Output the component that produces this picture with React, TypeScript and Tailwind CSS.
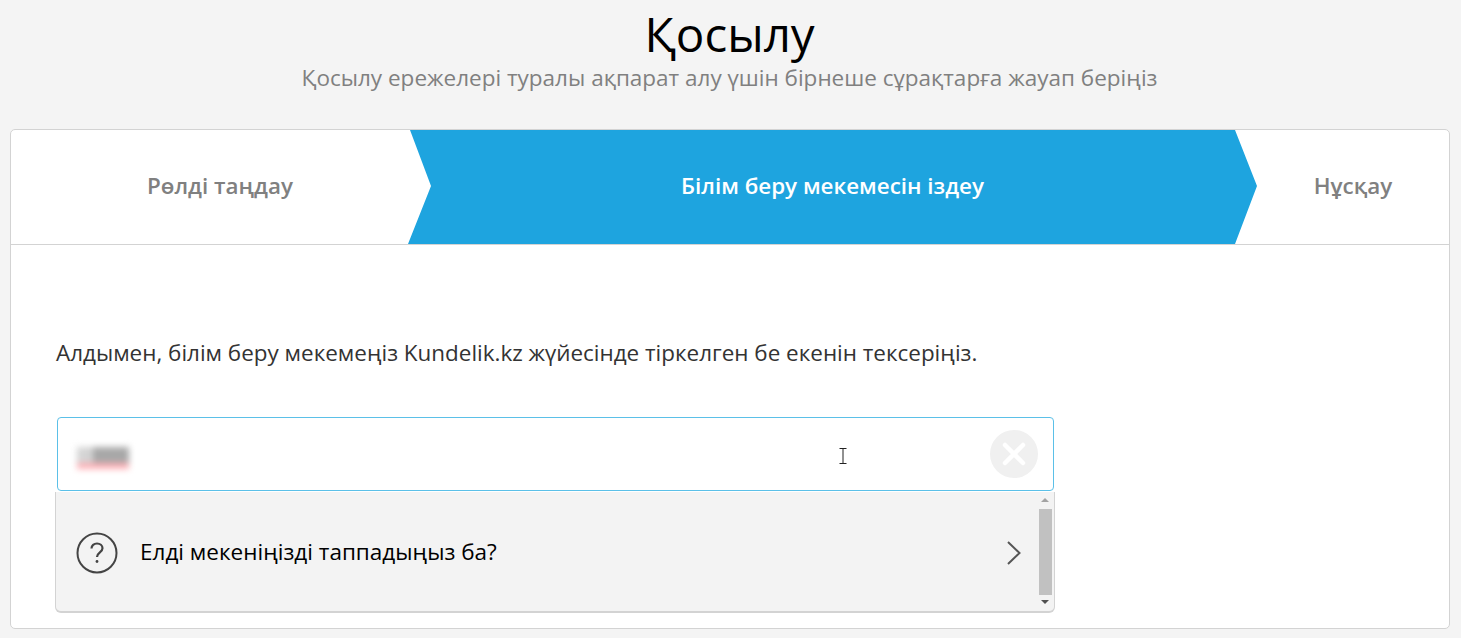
import React from 'react';

const font = "font-['Open_Sans',sans-serif]";

const App: React.FC = () => {
  return (
    <div className={`h-[638px] overflow-hidden bg-[#f4f4f4] ${font}`}>
      <header className="flex h-[129px] flex-col items-center pr-[2px]">
        <h1 className="mt-[5px] h-[58px] text-[47.5px] leading-[58px] font-normal text-black">Қосылу</h1>
        <p className="text-[22.5px] leading-[30px] text-[#808080]">
          Қосылу ережелері туралы ақпарат алу үшін бірнеше сұрақтарға жауап беріңіз
        </p>
      </header>

      <main className="mr-[11px] ml-[10px] h-[500px] rounded-[5px] border border-[#d3d3d3] bg-white">
        {/* steps */}
        <div className="flex h-[115px] border-b border-[#d3d3d3]">
          <div className="flex w-[397px] items-center justify-center pb-[2px] pl-[21px] text-[22.4px] font-semibold text-[#808080]">
            Рөлді таңдау
          </div>
          <div className="flex w-[849px] items-center justify-center bg-[#1ea4df] pb-[2px] text-[22.4px] font-semibold text-white [clip-path:polygon(2px_0,827px_0,849px_56px,827px_100%,0_100%,23px_56px)]">
            Білім беру мекемесін іздеу
          </div>
          <div className="flex flex-1 items-center justify-center pb-[2px] text-[22.4px] font-semibold text-[#808080]">Нұсқау</div>
        </div>

        <div className="px-[45px] pt-[91px]">
          <p className="text-[22.45px] leading-[34px] text-[#333333]">
            Алдымен, білім беру мекемеңіз Kundelik.kz жүйесінде тіркелген бе екенін тексеріңіз.
          </p>

          {/* search field */}
          <div className="relative mt-[47px] ml-px flex h-[74px] w-[997px] items-center justify-between rounded-[4px] border border-[#5bc0e8] pr-[15px] pl-[19px]">
            <div className="mt-[8px] flex w-[52px] flex-col blur-[3px]">
              <div className="flex h-[16px]">
                <div className="w-[16px] bg-[#d4d4d4]" />
                <div className="flex-1 bg-[#a8a8a8]" />
              </div>
              <div className="h-[6px] bg-[#ffb0b6]" />
            </div>
            <svg className="absolute top-[30px] left-[781px]" width="8" height="16" viewBox="0 0 8 16" fill="none" stroke="#222" strokeWidth="1">
              <path d="M0.5 0.5H7.5M4 0.5V15.5M0.5 15.5H7.5" />
            </svg>
            <div className="flex h-[48px] w-[48px] items-center justify-center rounded-full bg-[#f0f0f0]">
              <svg width="26" height="26" viewBox="0 0 26 26" fill="none" stroke="#fff" strokeWidth="4.5" strokeLinecap="round">
                <path d="M4 4L22 22M22 4L4 22" />
              </svg>
            </div>
          </div>

          {/* suggestions */}
          <div className="mt-px -ml-px flex h-[121px] w-[1000px] rounded-b-[6px] border border-t-0 border-b-2 border-[#d3d3d3] bg-[#f3f3f3]">
            <div className="flex flex-1 items-start pt-[40px] pl-[20px]">
              <svg width="42" height="42" viewBox="0 0 42 42" fill="none" stroke="#444" strokeWidth="2">
                <circle cx="21" cy="21" r="19.5" />
                <path d="M15.5 16.5c0-3.200 2.500-5 5.500-5s5.500 1.800 5.500 4.800c0 4-5.500 4.200-5.500 8.700" strokeWidth="2.200" />
                <circle cx="21" cy="29.500" r="1.400" fill="#444" stroke="none" />
              </svg>
              <span className="ml-[22px] text-[22.5px] leading-[40px] text-black">Елді мекеніңізді таппадыңыз ба?</span>
              <svg className="mt-[8px] mr-[15px] ml-auto" width="16" height="26" viewBox="0 0 16 26" fill="none" stroke="#555" strokeWidth="2">
                <path d="M2 2L13.500 13L2 24" />
              </svg>
            </div>
            <div className="flex w-[17px] flex-col items-center pt-[6px] pr-px">
              <div className="h-0 w-0 border-x-[4px] border-b-[4px] border-x-transparent border-b-[#a3a3a3]" />
              <div className="mt-[7px] h-[86px] w-[13px] bg-[#c1c1c1]" />
              <div className="mt-[5px] h-0 w-0 border-x-[4px] border-t-[4px] border-x-transparent border-t-[#505050]" />
            </div>
          </div>
        </div>
      </main>
    </div>
  );
};

export default App;
